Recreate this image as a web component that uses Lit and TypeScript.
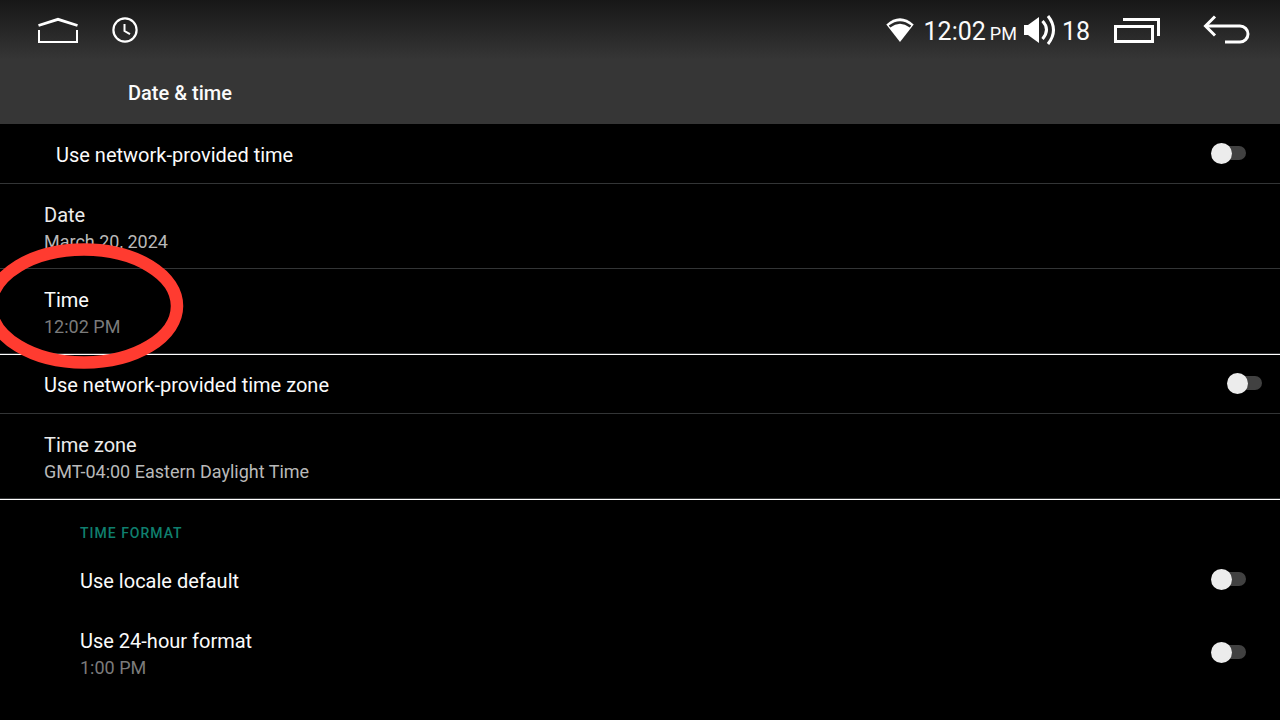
import { LitElement, html, css, svg, nothing } from "lit";
import { customElement, property } from "lit/decorators.js";

@customElement("setting-row")
class SettingRow extends LitElement {
  @property() label = "";
  @property() summary = "";
  @property({ type: Boolean }) toggle = false;
  @property({ type: Boolean }) dim = false;
  @property({ type: Boolean }) soft = false;

  static styles = css`
    :host {
      display: block;
      border-bottom: 1px solid #333536;
    }
    :host([plain]) {
      border-bottom-color: transparent;
    }
    .row {
      box-sizing: border-box;
      display: flex;
      align-items: center;
      justify-content: space-between;
      width: 100%;
      padding: 0 var(--row-end, 18px) 0 var(--row-start, 44px);
      border: 0;
      background: none;
      color: #fbfbfb;
      font: inherit;
      text-align: left;
    }
    .text {
      display: flex;
      flex-direction: column;
      padding: 17px 0 14px;
    }
    .label {
      font-size: 20px;
      line-height: 28px;
    }
    .soft {
      color: #ececec;
    }
    .summary {
      font-size: 18px;
      line-height: 25px;
      color: #b9b9b9;
    }
    .dim {
      color: #7b7b7b;
    }
    .switch {
      appearance: none;
      position: relative;
      flex: none;
      width: 35px;
      height: 21px;
      margin: 0;
    }
    .switch::before,
    .switch::after {
      content: "";
      position: absolute;
    }
    .switch::before {
      inset: 3px 0 4px 4px;
      border-radius: 7px;
      background: #414141;
    }
    .switch::after {
      inset: 0 auto 0 0;
      width: 21px;
      border-radius: 50%;
      background: #ececec;
    }
    .switch:checked::before {
      background: #0b5c50;
    }
    .switch:checked::after {
      inset: 0 0 0 auto;
      background: #138a78;
    }
  `;

  render() {
    const text = html`<span class="text">
      <span class="label ${this.soft ? "soft" : ""}">${this.label}</span>
      ${this.summary
        ? html`<span class="summary ${this.dim ? "dim" : ""}">${this.summary}</span>`
        : nothing}
    </span>`;
    return this.toggle
      ? html`<label class="row">${text}<input class="switch" type="checkbox" role="switch" /></label>`
      : html`<button class="row" type="button">${text}</button>`;
  }
}

const homeIcon = svg`
  <path d="M1.500 9.500 21 3.300 40.500 9.500" stroke-width="2.800"/>
  <path d="M2 14V26H40V14" stroke-width="2"/>`;

@customElement("app-root")
class AppRoot extends LitElement {
  static styles = css`
    :host {
      display: block;
      min-height: 100vh;
      background: #000;
      color: #fbfbfb;
      font-family: Roboto, sans-serif;
      overflow: hidden;
    }
    .top {
      background: linear-gradient(#171717, #363636 60px);
    }
    .status {
      display: flex;
      align-items: center;
      height: 60px;
      padding: 0 30px 0 36px;
    }
    .icon {
      display: block;
      fill: none;
      stroke: #fff;
    }
    .nav {
      display: block;
      padding: 0;
      border: 0;
      background: none;
    }
    .alarm {
      margin-left: 32px;
    }
    .info {
      display: flex;
      align-items: center;
      margin-left: auto;
    }
    .clock,
    .volume {
      font-size: 25px;
      line-height: 30px;
      padding-top: 4px;
    }
    .clock {
      margin: 0 6px 0 9px;
    }
    .clock small {
      font-size: 18px;
      line-height: 1;
      margin-left: 4px;
    }
    .volume {
      margin: 0 24px 0 5px;
    }
    .back {
      margin-left: 40px;
    }
    .title {
      margin: 0;
      padding: 19px 128px 17px;
      font-size: 20px;
      line-height: 28px;
      font-weight: 500;
    }
    .inset {
      --row-start: 56px;
      --row-end: 34px;
    }
    .group {
      margin-bottom: -1px;
      border-bottom: 1px solid #fff;
    }
    .marked {
      position: relative;
    }
    .ring {
      position: absolute;
      z-index: 1;
      left: -20px;
      top: -30px;
      pointer-events: none;
    }
    .section {
      --row-start: 80px;
      --row-end: 34px;
    }
    .heading {
      margin: 0;
      padding: 24px 80px 7px;
      font-size: 14px;
      line-height: 20px;
      font-weight: 500;
      letter-spacing: 1px;
      text-transform: uppercase;
      color: #0f7f6e;
    }
  `;

  render() {
    return html`
      <header class="top">
        <div class="status">
          <button class="nav" type="button" aria-label="Home">
            <svg class="icon" width="44" height="28" viewBox="-1 0 44 28">${homeIcon}</svg>
          </button>
          <svg class="icon alarm" width="26" height="26" viewBox="0 0 26 26">
            <circle cx="13" cy="13" r="11.600" stroke-width="2.200" />
            <path d="M12.500 7V14L18 17.200" stroke-width="2" />
          </svg>
          <div class="info">
            <svg class="icon" width="30" height="26" viewBox="0 0 30 26">
              <path d="M1.300 7.500Q15-5 28.700 7.500L15 25Z" fill="#fff" stroke="none" />
              <path d="M4.500 9.500Q15 1.500 25.500 9.500" stroke="#292929" stroke-width="2.400" />
            </svg>
            <span class="clock">12:02<small>PM</small></span>
            <svg class="icon" width="34" height="32" viewBox="0 0 34 32">
              <path d="M1 11H5L16 3V29L5 21H1Z" fill="#fff" stroke="none" />
              <path d="M19.500 7Q27.500 15.500 19.500 25M25 2Q36 16 25 30" stroke-width="3" />
            </svg>
            <span class="volume">18</span>
            <button class="nav" type="button" aria-label="Recent apps">
              <svg class="icon" width="46" height="26" viewBox="0 0 46 26" stroke-width="3">
                <path d="M1.500 9.500H38.500V24.500H1.500Z" />
                <path d="M9 2.500H44.500V19" />
              </svg>
            </button>
            <button class="nav back" type="button" aria-label="Back">
              <svg class="icon" width="50" height="30" viewBox="0 0 50 30" stroke-width="3">
                <path d="M15 1.500 5.500 11 15 20.500" />
                <path d="M6 11H40A8 8 0 0 1 40 27H25" />
              </svg>
            </button>
          </div>
        </div>
        <h1 class="title">Date &amp; time</h1>
      </header>
      <main>
        <setting-row class="inset" label="Use network-provided time" toggle></setting-row>
        <div class="group">
          <setting-row label="Date" summary="March 20, 2024" soft></setting-row>
          <div class="marked">
            <setting-row label="Time" summary="12:02 PM" dim></setting-row>
            <svg class="ring" width="210" height="134" viewBox="-20 239 210 134">
              <ellipse cx="84" cy="306" rx="93" ry="56.500" fill="none" stroke="#ff3b30" stroke-width="12.500" />
            </svg>
          </div>
        </div>
        <div class="group">
          <setting-row label="Use network-provided time zone" toggle></setting-row>
          <setting-row label="Time zone" summary="GMT-04:00 Eastern Daylight Time" soft></setting-row>
        </div>
        <section class="section">
          <h2 class="heading">Time format</h2>
          <setting-row label="Use locale default" toggle plain></setting-row>
          <setting-row label="Use 24-hour format" summary="1:00 PM" toggle dim plain></setting-row>
        </section>
      </main>
    `;
  }
}
